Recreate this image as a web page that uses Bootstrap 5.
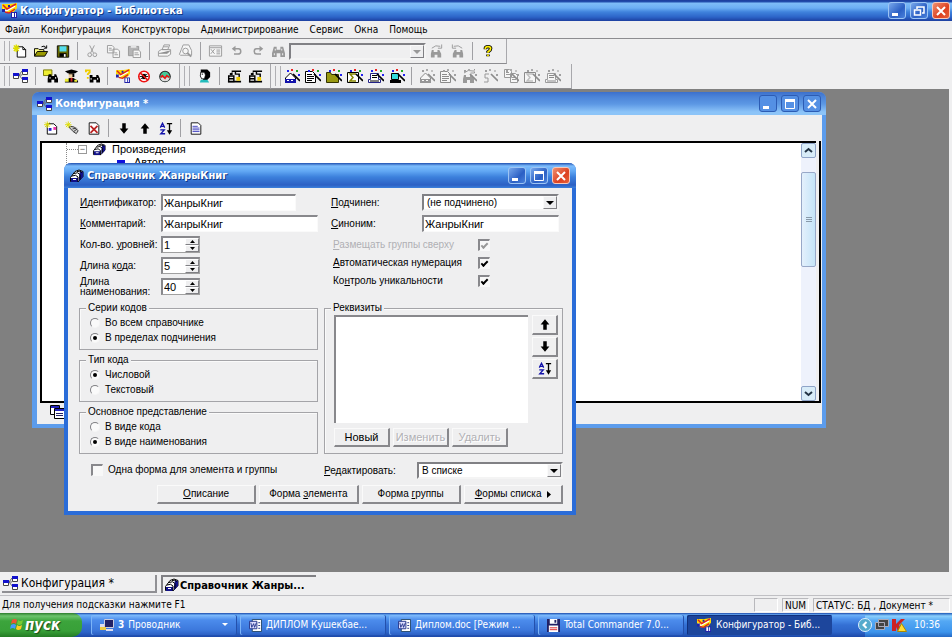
<!DOCTYPE html>
<html lang="ru">
<head>
<meta charset="utf-8">
<meta name="viewport" content="width=device-width, initial-scale=1">
<title>Конфигуратор - Библиотека</title>
<link href="https://cdn.jsdelivr.net/npm/bootstrap@5.3.0/dist/css/bootstrap.min.css" rel="stylesheet">
<style>
:root{--face:#efeff0;--shade:#9a9a9e;--ui:"DejaVu Sans Condensed","DejaVu Sans",sans-serif;--form:"Liberation Sans",Arial,sans-serif}
body{font:10px/14px var(--ui);color:#000;background:var(--face)}
button,input,select,textarea{font:inherit;color:inherit;border-radius:0;margin:0}
svg{display:block;flex:none}
u{text-underline-offset:1px}
.capbar{height:21px;padding:0 2px 0 1px;gap:2px;color:#fff;font-weight:700;font-size:11px;text-shadow:1px 1px 0 #123a86;background:linear-gradient(#1c3c9c 0,#2350b0 2px,#7fbdf8 3px,#6caef4 8px,#3f82dc 12px,#2c64c8 17px,#1c3fa0 21px)}
.cap-btns{gap:4px}
.cap-btn{width:18px;height:17px;padding:0;border:1px solid #9cc4f4;border-radius:3px;background:linear-gradient(135deg,#78a8ec,#2b5fc4 60%,#4a82dc)}
.cap-btn.shut{background:linear-gradient(135deg,#f09070,#dc4020 60%,#e86038);border-color:#f8c8b8}
.cap-btn svg{margin:auto}
.menubar{height:18px;padding-left:5px;gap:11px;border-bottom:1px solid #8c8c90}
.menubar a{color:#000;text-decoration:none}
.tools{height:25px}
.band{height:25px;border-right:1px solid #a8a8ac;border-bottom:1px solid #8c8c90}
.grip{width:6px;height:20px;margin:0 0 0 4px;border:solid #b0b0b4;border-width:0 1px}
.tb{width:21px;height:21px;padding:0;border:0;background:none;flex:none}
.tb svg{margin:auto}
.tb:disabled svg{filter:grayscale(1) opacity(.42)}
.rule{width:1px;height:18px;margin:0 4px;background:#a0a0a4;flex:none}
.sel{position:relative;display:flex}
.sel select{appearance:none;width:100%;height:17px;padding:0 18px 0 3px;border:2px solid;border-color:#808084 #f4f4f4 #f4f4f4 #808084;background:#fff;line-height:12px;opacity:1}
.sel i{position:absolute;right:2px;top:2px;width:14px;bottom:2px;background:var(--face);border:1px solid;border-color:#fafafa #808084 #808084 #fafafa;pointer-events:none}
.sel i::after{content:"";position:absolute;left:2px;top:4px;border:4px solid transparent;border-top-color:#000;border-bottom:0}
.sel.off i::after{border-top-color:#999}
.sel.off select{background:var(--face)}
.find-box{width:137px}
.desk{background:#808080;margin-right:3px;min-height:0;overflow:hidden}
.win{position:absolute;background:var(--face)}
.w-conf{left:32px;top:3px;width:794px;height:336px;border:solid #5c9cec;border-width:0 4px 4px 5px;border-radius:7px 7px 0 0}
.w-conf .capbar{height:23px;margin:0 -4px 0 -5px;padding:0 5px;border-radius:7px 7px 0 0;text-shadow:none;background:linear-gradient(#3c70cc,#4c84d8 5px,#5c98e4 12px,#8cc4f8 20px,#8cc4f8)}
.w-conf .cap-btn{background:#5490e4;border-color:#2c5cb4}
.w-dlg{left:64px;top:74px;width:512px;border:solid #2a6cd8;border-width:0 4px 4px;border-radius:7px 7px 0 0}
.w-dlg .capbar{height:25px;margin:0 -4px;padding:0 6px 0 5px;border-radius:7px 7px 0 0;background:linear-gradient(#2050b0 0,#7cbcfc 3px,#62a8f4 8px,#3c80dc 14px,#2c60c4 22px,#3c80dc)}
.w-tools{height:26px;flex:none}
.tree{margin:0 1px 0 3px;border-right:2px solid #000;border-bottom:2px solid #000;font:11px/13px var(--form)}
.tree-pane{border:solid #000;border-width:2px 0 0 2px;background:#fff;margin-right:3px;overflow:hidden}
.tree-list{margin-left:24px;border-left:1px dotted #888}
.twig{width:11px;border-top:1px dotted #888}
.pm{width:9px;height:9px;border:1px solid #999;color:#555;display:grid;place-items:center;font:9px/7px var(--form)}
.sb{width:15px;background:#eef2fc}
.sb button{height:15px;padding:0;border:1px solid #8fa4c8;border-radius:2px;background:#d8ecf8}
.sb button svg{margin:auto}
.sb-thumb{height:95px;border:1px solid #98a8c8;border-radius:2px;background:linear-gradient(90deg,#e4f0fc,#c4e4f8);margin-top:14px}
.low{height:21px;padding:0 0 3px 13px;flex:none}
.form{font:10px/14px var(--form);padding:4px 9px 7px 11px}
.two{display:grid;grid-template-columns:1fr 1fr;column-gap:6px}
.frow{height:21px;display:flex;align-items:center}
.frow>label{width:82px;padding-left:1px;line-height:10px;white-space:nowrap}
.rt .frow>label{width:98px;padding-left:7px}
.frow+.crow{margin-top:2px}
.inp{height:17px;padding:0 1px;font-size:11px;line-height:13px;border:solid;border-width:2px 1px 1px 2px;border-color:#88888c #fafafa #fafafa #88888c;background:#fff}
.short{width:135px}
.spin{width:39px;height:17px;border:solid;border-width:2px 1px 1px 2px;border-color:#88888c #a0a0a0 #a0a0a0 #88888c;background:#fff}
.spin input{width:22px;border:0;padding:0 0 0 1px;font-size:11px;line-height:13px;appearance:textfield;-moz-appearance:textfield;background:#fff}
.spin input::-webkit-inner-spin-button{appearance:none}
.spin button{width:14px;height:7px;padding:0;border:1px solid;border-color:#fff #808084 #808084 #fff;background:var(--face)}
.spin button svg{margin:auto}
.crow{height:18px;padding-left:9px;display:flex;align-items:center}
.crow label{width:145px}
.chk{appearance:none;width:12px;height:12px;border:solid;border-width:2px 1px 1px 2px;border-color:#88888c #f8f8f8 #f8f8f8 #88888c;background:#f8f8f8;display:grid;place-items:center}
.chk:checked::after{content:"";width:7px;height:4px;border:solid #000;border-width:0 0 2px 2px;transform:translateY(-1px) rotate(-45deg)}
.chk:disabled:checked::after{border-color:#999}
.dim{color:#b0b0b4}
.grp{border:1px solid #a4a4a8;box-shadow:inset 1px 1px 0 #fafafa;padding:0 8px 4px 10px;height:48px}
.grp legend{float:none;width:auto;font-size:10px;line-height:12px;margin:0 0 1px -4px;padding:0 2px;background:var(--face)}
.opt{height:15px;display:flex;align-items:center;gap:5px}
.opt input[type=radio]{appearance:none;width:10px;height:10px;border:1px solid;border-color:#808084 #f6f6f6 #f6f6f6 #808084;border-radius:50%;background:#fafafa;display:grid;place-items:center}
.opt input[type=radio]:checked::after{content:"";width:4px;height:4px;border-radius:50%;background:#000}
.stack{display:grid;gap:4px;margin-top:5px}
.pb{height:19px;padding:0;line-height:14px;border:solid;border-width:1px 2px 2px 1px;border-color:#fafafa #88888c #88888c #fafafa;background:var(--face);text-align:center}
.pb:disabled{color:#b0b0b4;text-shadow:1px 1px 0 #fff}
.pb svg{margin:auto}
.rq{height:152px;padding:0 4px 0 9px}
.rq legend{margin-left:-3px}
.rq textarea{display:block;width:100%;height:108px;resize:none;border:solid;border-width:2px 0 0 2px;border-color:#88888c;background:#fff}
.side{width:26px;gap:2px}
.side .pb{height:20px}
.three{gap:3px;margin-top:5px}
.three .pb{width:56px;font-size:11px}
.last{margin:8px 0 6px}
.edl{width:93px}
.act{gap:3px;padding-left:78px}
.act .pb{flex:1}
.tabs{height:23px;padding:3px 0 0 2px;gap:4px}
.tabs button{width:155px;height:18px;padding:0 1px;font-size:12px;line-height:15px;border:solid;background:none;white-space:nowrap}
.tabs .t1{border-width:0 2px 2px 0;border-color:#909094;gap:2px}
.tabs .t2{border-width:2px 0 0 2px;border-color:#808084;font-weight:700;font-size:11px}
.stat{height:18px;padding:0 2px;border-top:1px solid #c0c0c4}
.stat .cell{height:14px;border:1px solid;border-color:#b8b8bc #fff #fff #b8b8bc;padding:0 2px;line-height:13px}
.blank{width:24px}
.task{height:24px;color:#fff;background:linear-gradient(#1c48a8 0,#6cb0f8 2px,#4c90ec 6px,#3470d4 12px,#2c64c8 19px,#1c48a8)}
.go{width:82px;padding:0 0 0 10px;border:0;border-radius:0 9px 10px 0;color:#fff;font:italic 700 15px/20px var(--ui);text-shadow:1px 1px 1px #1c4c1c;background:linear-gradient(#2c7c2c,#6cc46c 3px,#3ca43c 8px,#38a038 18px,#247c24);gap:1px}
.jobs{padding:2px 0 2px 9px;gap:4px;min-width:0}
.jobs button{flex:1;min-width:0;border:0;border-radius:2px;padding:0 8px 0 9px;gap:4px;color:#fff;white-space:nowrap;background:linear-gradient(#80bcfc,#4c8cec 5px,#3c78dc 15px,#2c60c4);box-shadow:inset 1px 0 #7cb4f8,1px 0 #2450ac}
.jobs .on{background:#1d469c;box-shadow:inset 1px 1px #10307c}
.tray{width:87px;margin-left:33px;gap:2px;color:#fff;background:linear-gradient(#1c58b8 0,#8cd0fc 3px,#54a8f4 8px,#3c94ec 19px,#2468c4)}
.expand{margin-left:-7px}
</style>
</head>
<body class="d-flex flex-column vh-100 overflow-hidden">

<svg width="0" height="0" class="position-absolute" aria-hidden="true">
<defs>
<symbol id="logo" viewBox="0 0 17 15"><path fill="#fd0" d="M1 1h8l7-1v5l-4 5H5L1 7z"/><path fill="none" stroke="#fff" stroke-width="1.500" d="M2 6l3 2 9-5"/><path fill="none" stroke="#d22" stroke-width="1.500" d="M2 2l4 4 9-5M4 9l4 1 6-4"/><path fill="#22a" d="M1 6h3v3H1zM7 2h2v2H7zM10 9h6v6h-6z"/><path fill="#fff" d="M11 10h2v4h-2zM14 10h1v4h-1z"/></symbol>
<symbol id="nodes" viewBox="0 0 16 14"><path stroke="#666" fill="none" d="M5 6h4M6 6l3-4M6 6l4 5"/><path fill="#fff" stroke="#444" d="M.5 4.500h5v5h-5zM9.500.5h5v5h-5zM9.500 8.500h5v5h-5z"/><path fill="#11c" d="M0 4h6v3H0zM9 0h6v3H9zM9 8h6v3H9z"/></symbol>
<symbol id="drum" viewBox="0 0 16 14"><path fill="#fff" stroke="#000" d="M1.500 8.500L6 2.500q4-3 8 0v5L9.500 12.500h-8z"/><path fill="#118" d="M2 9h7v4H2zM11 2l3 1v5l-4 4V8z"/><path stroke="#000" fill="none" d="M3 7q4-2 6 1v5M5 4.500q4-2 6 1v5M8 2.500q3-1 5 1"/><path fill="#fff" d="M4 10h3v1H4z"/></symbol>
<symbol id="new" viewBox="0 0 16 14"><path fill="#fff" stroke="#000" d="M4.500 2.500h6l3 3v8h-9z"/><path fill="none" stroke="#000" d="M10.500 2.500v3h3"/><path stroke="#dd0" stroke-width="1.500" d="M0 4h7M3.500 0v8M1 1l5 6M6 1L1 7"/></symbol>
<symbol id="open" viewBox="0 0 16 14"><path fill="#ff8" stroke="#000" d="M.5 12.500v-8h4l1 1h5v2"/><path fill="#990" stroke="#000" d="M.5 12.500l3-5h11l-3 5z"/><path fill="none" stroke="#000" d="M8 2.500q3-2 5 1M13.500 1v3h-3"/></symbol>
<symbol id="save" viewBox="0 0 16 14"><path fill="#660" stroke="#000" d="M1.500.5h13v13h-13z"/><path fill="#5de" d="M4 1h8v6H4z"/><path fill="#000" d="M4 9h8v4H4z"/><path fill="#fff" d="M9 10h2v3H9z"/></symbol>
<symbol id="cut" viewBox="0 0 16 14"><path stroke="#222" fill="none" d="M5 1l4 8M10 1L6 9"/><circle cx="5" cy="11" r="2" fill="none" stroke="#222"/><circle cx="10.500" cy="11" r="2" fill="none" stroke="#222"/></symbol>
<symbol id="copy" viewBox="0 0 16 14"><path fill="#fff" stroke="#222" d="M1.500.5h5l2 2v6h-7zM7.500 4.500h5l2 2v7h-7z"/><path stroke="#222" d="M3 3.500h3M3 5.500h4M9 8.500h3M9 10.500h4"/></symbol>
<symbol id="paste" viewBox="0 0 16 14"><path fill="#666" stroke="#222" d="M1.500 1.500h11v10h-11z"/><path fill="#ddd" d="M4 1h6v2H4z"/><path fill="#fff" stroke="#222" d="M6.500 5.500h6l2 2v6h-8z"/><path stroke="#222" d="M8 8.500h4M8 10.500h5"/></symbol>
<symbol id="print" viewBox="0 0 16 14"><path fill="#fff" stroke="#222" d="M5.500 5.500l2-5h6l-2 5zM1.500 7.500l3-2h10v5l-3 2h-10z"/><path stroke="#222" d="M2 9.500h9l3-3M7 2.500h5"/></symbol>
<symbol id="preview" viewBox="0 0 16 14"><path fill="#fff" stroke="#222" d="M1.500 10.500l2-5 2-5h6l3 6v5h-12z"/><circle cx="8" cy="7" r="3" fill="none" stroke="#222"/><path stroke="#222" stroke-width="2" d="M10 9l4 4"/></symbol>
<symbol id="props" viewBox="0 0 16 14"><path fill="#fff" stroke="#222" d="M1.500 1.500h13v11h-13z"/><path fill="none" stroke="#222" d="M2 3.500h12M3 5l4 5M7 5l-4 5M9 6h4M9 8h4M9 10h4"/></symbol>
<symbol id="undo" viewBox="0 0 16 14"><path fill="none" stroke="#222" stroke-width="2" d="M4 4h6q3 0 3 3.500T9 11H4"/><path fill="#222" d="M6 0v8L1 4z"/></symbol>
<symbol id="find" viewBox="0 0 16 14"><path fill="#222" d="M3 2h3v3h4V2h3l2 7v4h-5V9H6v4H1V9z"/><path fill="#fff" d="M4 4h1v2H4zM11 4h1v2h-1zM3 9h1v2H3zM12 9h1v2h-1z"/></symbol>
<symbol id="findn" viewBox="0 0 16 14"><path fill="#222" d="M3 6h2v2h4V6h2l2 4v4H9v-3H6v3H2v-4z"/><path fill="none" stroke="#222" d="M3 4q4-4 9-2M13.500 0v4h-4"/></symbol>
<symbol id="help" viewBox="0 0 16 14"><path fill="none" stroke="#000" stroke-width="4" d="M5 5V4q0-2 3-2t3 2-3 4v1M8 11v2"/><path fill="none" stroke="#fe0" stroke-width="2" d="M5 5V4q0-2 3-2t3 2-3 4v1M8 11v2"/></symbol>
<symbol id="folderfind" viewBox="0 0 16 14"><path fill="#ee3" stroke="#770" d="M.5.5h9v6h-9z"/><path d="M6 5h3v2h3V5h2l2 5v4h-4v-3H9v3H5v-4z"/><path fill="#fff" d="M7 8h1v2H7zM13 8h1v2h-1z"/></symbol>
<symbol id="user" viewBox="0 0 16 14"><path d="M1 2l7-2 7 2-3 2H4z"/><path d="M6 9h4l5 3v2H1v-2z"/><path fill="#ec9" d="M5 4h5v5H5z"/><path d="M5 4h5v1H5zM9 4h2v4H9z"/><path fill="#ee3" d="M1 10h4v3H1zM11 11h3v2h-3z"/><path fill="#c22" d="M7 9h2v4H7z"/></symbol>
<symbol id="qfind" viewBox="0 0 16 14"><path d="M5 6h3v2h4V6h2l2 4v4h-4v-3H9v3H5v-4z"/><path fill="#fff" d="M6 9h1v2H6zM13 9h1v2h-1z"/><path fill="none" stroke="#ec0" stroke-width="2" d="M1 3V1h4v2L3 5v1M3 8v2"/></symbol>
<symbol id="bug" viewBox="0 0 16 14"><circle cx="8" cy="7" r="6" fill="#fff"/><path d="M6 4h4v6H6z"/><path stroke="#000" d="M4 4l8 6M12 4l-8 6M3 7h10"/><circle cx="8" cy="7" r="6" fill="none" stroke="#e11" stroke-width="1.800"/><path stroke="#e11" stroke-width="1.800" d="M4 3l8 8"/></symbol>
<symbol id="wave" viewBox="0 0 16 14"><circle cx="8" cy="7" r="6" fill="#4c9" stroke="#222" stroke-width="1.300"/><path fill="#ddd" d="M2.500 8h11q-1 4.500-5.500 4.500T2.500 8z"/><path fill="none" stroke="#e11" stroke-width="1.800" d="M3 8l2-2 3 3 2-3 3 2"/></symbol>
<symbol id="face" viewBox="0 0 16 14"><path d="M4 0h7l3 3v5l-4 4H6l1-3-3-1z"/><path fill="#fff" stroke="#000" stroke-width=".8" d="M4 3h4l1 3-1 4H5L3.500 7z"/><path fill="#2bb" d="M4 11h7l2 3H3z"/><path d="M5 4.500h1.500v1H5z"/></symbol>
<symbol id="tap" viewBox="0 0 16 14"><path fill="none" stroke="#000" stroke-width="1.500" d="M5 2h10M9 2v3h4v3M1.800 13V7h5.500v6zM2 10h5"/><path d="M1 12h14v2H1zM3 4l3-1v3H3z"/><path fill="#ec0" d="M10 8h4v4h-4z"/></symbol>
<symbol id="wand" viewBox="0 0 16 14"><path stroke="#000" stroke-width="1.700" d="M9 5l7 7"/><path fill="#e22" d="M7 0h2v2H7z"/><path fill="#2a2" d="M12 1h2v2h-2z"/><path fill="#22e" d="M14 5h2v2h-2zM3 1h2v2H3z"/></symbol>
<symbol id="b1" viewBox="0 0 16 14"><path fill="#fff" stroke="#000" d="M1.500 9l5-5 5 5v4h-10z"/><path fill="#11a" d="M1 10h11v4H1z"/><path fill="#fff" d="M3 11h2v1H3zM7 11h2v1H7z"/></symbol>
<symbol id="b2" viewBox="0 0 16 14"><path fill="#fff" stroke="#000" d="M.5 2.500h7l3 3v8H.5z"/><path stroke="#000" d="M2 5.500h5M2 7.500h7M2 9.500h7M2 11.500h5"/></symbol>
<symbol id="b3" viewBox="0 0 16 14"><path fill="#991" stroke="#330" d="M.5 3.500h4l1 2h7v8H.5z"/></symbol>
<symbol id="b4" viewBox="0 0 16 14"><path fill="#fff" stroke="#000" d="M.5 3.500h11v10H.5z"/><path fill="none" stroke="#880" stroke-width="1.500" d="M9 5H3l3 3.500L3 12h6"/></symbol>
<symbol id="b5" viewBox="0 0 16 14"><path fill="#fff" stroke="#228" d="M2.500 4.500h8v6h2v3H.5v-3h2z"/><path stroke="#000" d="M4 6.500h5M4 8.500h5M2 12h9"/></symbol>
<symbol id="b6" viewBox="0 0 16 14"><path fill="#3dd" stroke="#000" d="M2.500 4.500h7v6h-7z"/><path fill="#000" d="M1 11h11v3H1z"/></symbol>
<symbol id="down" viewBox="0 0 16 14"><path d="M6 1h4v6h3l-5 6-5-6h3z"/></symbol>
<symbol id="up" viewBox="0 0 16 14"><path d="M6 13h4V7h3L8 1 3 7h3z"/></symbol>
<symbol id="sort" viewBox="0 0 16 14"><path fill="none" stroke="#11a" stroke-width="1.500" d="M1.500 6L4 1l2.500 5M2 4.500h4M1.500 8.500H6L2 13h5"/><path stroke="#000" stroke-width="1.500" d="M9 1.500h6M12 1v10"/><path d="M9 9h6l-3 5z"/></symbol>
<symbol id="page" viewBox="0 0 16 14"><path fill="#fff" stroke="#000" d="M2.500.5h8l3 3v10h-11z"/><path stroke="#33b" d="M4 4.500h6M4 6.500h8M4 8.500h8M4 10.500h8"/></symbol>
<symbol id="pages" viewBox="0 0 16 14"><path fill="#fff" stroke="#000" d="M.5.5h9v9h-9z"/><path fill="#fff" stroke="#000" d="M4.500 3.500h10v10h-10z"/><path fill="#22b" d="M1 1h8v2H1zM5 4h9v2H5z"/><path stroke="#226" d="M6 8.500h7M6 10.500h7"/></symbol>
<symbol id="newobj" viewBox="0 0 16 14"><path fill="#fff" stroke="#000" d="M3.500 2.500h7l3 3v8h-10z"/><path fill="#22c" d="M5 7h3v3H5z"/><path fill="#e3a" d="M10 6h3v3h-3z"/><path stroke="#dd0" d="M0 3.500h7M3.500 0v7M1 1l5 5M6 1L1 6"/></symbol>
<symbol id="key" viewBox="0 0 16 14"><path fill="#ccc" stroke="#333" d="M5 5l5 1 4 4-2 3-3-2-4-4z"/><path stroke="#333" d="M8 8l4-1M9 11l4-3"/><path stroke="#dd0" d="M0 3.500h7M3.500 0v7M1 1l5 5M6 1L1 6"/></symbol>
<symbol id="del" viewBox="0 0 16 14"><path fill="#fff" stroke="#000" d="M2.500.5h8l3 3v10h-11z"/><path stroke="#b22" stroke-width="2" d="M4 4l8 8M12 4l-8 8"/></symbol>
<symbol id="min" viewBox="0 0 12 12"><path fill="#fff" d="M1 8h6v3H1z"/></symbol>
<symbol id="max" viewBox="0 0 12 12"><path fill="none" stroke="#fff" d="M1.500 2v8.500h9V2"/><path fill="#fff" d="M1 1h10v3H1z"/></symbol>
<symbol id="res" viewBox="0 0 12 12"><path fill="none" stroke="#fff" stroke-width="1.500" d="M4 4V2h7v6H9M1.500 5h6v5h-6z"/></symbol>
<symbol id="x" viewBox="0 0 12 12"><path stroke="#fff" stroke-width="2" d="M2 2l8 8M10 2l-8 8"/></symbol>
<symbol id="word" viewBox="0 0 14 14"><path fill="#fff" stroke="#246" d="M3.500.5h10v13h-10z"/><path fill="#ddf" stroke="#238" d="M.5 2.500h8v8h-8z"/><path fill="none" stroke="#238" d="M2 4l1 5 2-4 1 4 2-5M10 4h2M10 7h2M10 10h2"/></symbol>
<symbol id="pc" viewBox="0 0 14 14"><path fill="#226" stroke="#ccd" d="M4.500 1.500h9v8h-9z"/><path fill="#dde" d="M6 11h7v2H6zM0 6h4v3H0z"/><path fill="#ec4" d="M0 9h6v3H0z"/></symbol>
<symbol id="disk" viewBox="0 0 14 14"><path fill="#226" d="M0 0h14v14H0z"/><path fill="#fff" d="M3 0h8v5H3zM2 7h10v7H2z"/><path fill="#226" d="M8 1h2v3H8z"/><path stroke="#d22" d="M3 9.500h8M3 11.500h8"/></symbol>
<symbol id="flag" viewBox="0 0 14 14"><path fill="#e53" d="M2 2q3-2 5 0L6 6Q4 4 1 6z"/><path fill="#7c3" d="M8 2q2 2 5 0l-1 4q-3 2-5 0z"/><path fill="#49f" d="M1 7q3-2 5 0l-1 4q-2-2-5 0z"/><path fill="#fc2" d="M7 7q2 2 5 0l-1 4q-3 2-5 0z"/></symbol>
</defs>
</svg>

<header class="capbar d-flex align-items-center">
  <svg width="17" height="15"><use href="#logo"/></svg>
  <span class="flex-grow-1">Конфигуратор - Библиотека</span>
  <div class="cap-btns d-flex">
    <button class="cap-btn" aria-label="Свернуть"><svg width="12" height="12"><use href="#min"/></svg></button>
    <button class="cap-btn" aria-label="Восстановить"><svg width="12" height="12"><use href="#res"/></svg></button>
    <button class="cap-btn shut" aria-label="Закрыть"><svg width="12" height="12"><use href="#x"/></svg></button>
  </div>
</header>

<nav class="menubar d-flex align-items-center">
  <a href="#">Файл</a><a href="#">Конфигурация</a><a href="#">Конструкторы</a><a href="#">Администрирование</a><a href="#">Сервис</a><a href="#">Окна</a><a href="#">Помощь</a>
</nav>

<div class="tools d-flex">
  <div class="band d-flex align-items-center pe-2">
    <span class="grip"></span>
    <button class="tb" aria-label="Новый"><svg width="15" height="14"><use href="#new"/></svg></button>
    <button class="tb" aria-label="Открыть"><svg width="15" height="14"><use href="#open"/></svg></button>
    <button class="tb" aria-label="Сохранить"><svg width="14" height="13"><use href="#save"/></svg></button>
    <span class="rule"></span>
    <button class="tb" disabled aria-label="Вырезать"><svg width="15" height="14"><use href="#cut"/></svg></button>
    <button class="tb" disabled aria-label="Копировать"><svg width="15" height="13"><use href="#copy"/></svg></button>
    <button class="tb" disabled aria-label="Вставить"><svg width="15" height="13"><use href="#paste"/></svg></button>
    <span class="rule"></span>
    <button class="tb" disabled aria-label="Печать"><svg width="15" height="14"><use href="#print"/></svg></button>
    <button class="tb" disabled aria-label="Просмотр"><svg width="15" height="14"><use href="#preview"/></svg></button>
    <span class="rule"></span>
    <button class="tb" disabled aria-label="Свойства"><svg width="15" height="14"><use href="#props"/></svg></button>
    <button class="tb" disabled aria-label="Отменить"><svg width="12" height="12"><use href="#undo"/></svg></button>
    <button class="tb" disabled aria-label="Повторить"><svg width="12" height="12"><use href="#undo" transform="matrix(-1 0 0 1 12 0)"/></svg></button>
    <button class="tb" disabled aria-label="Найти"><svg width="15" height="13"><use href="#find"/></svg></button>
    <span class="sel off find-box"><select aria-label="Строка поиска" disabled><option></option></select><i></i></span>
    <button class="tb" disabled aria-label="Найти далее"><svg width="15" height="14"><use href="#findn"/></svg></button>
    <button class="tb" disabled aria-label="Найти ранее"><svg width="15" height="14"><use href="#findn" transform="matrix(-1 0 0 1 15 0)"/></svg></button>
    <span class="rule"></span>
    <button class="tb" aria-label="Помощь"><svg width="14" height="14"><use href="#help"/></svg></button>
  </div>
</div>

<div class="tools d-flex">
  <div class="band d-flex align-items-center pe-1">
    <span class="grip"></span>
    <button class="tb" aria-label="Конфигурация"><svg width="16" height="14"><use href="#nodes"/></svg></button>
    <span class="rule"></span>
    <button class="tb" aria-label="Поиск в объектах"><svg width="15" height="14"><use href="#folderfind"/></svg></button>
    <button class="tb" aria-label="Пользователи"><svg width="15" height="14"><use href="#user"/></svg></button>
    <button class="tb" aria-label="Поиск по справке"><svg width="15" height="14"><use href="#qfind"/></svg></button>
    <span class="rule"></span>
    <button class="tb" aria-label="Предприятие"><svg width="16" height="14"><use href="#logo"/></svg></button>
    <button class="tb" aria-label="Отладчик"><svg width="14" height="13"><use href="#bug"/></svg></button>
    <button class="tb" aria-label="Монитор"><svg width="14" height="13"><use href="#wave"/></svg></button>
  </div>
  <div class="band d-flex align-items-center pe-1">
    <span class="grip"></span>
    <button class="tb ms-1" aria-label="Пользователь"><svg width="15" height="14"><use href="#face"/></svg></button>
    <span class="rule"></span>
    <button class="tb" aria-label="Загрузить"><svg width="15" height="14"><use href="#tap"/></svg></button>
    <button class="tb" aria-label="Выгрузить"><svg width="15" height="14"><use href="#tap"/></svg></button>
  </div>
  <div class="band d-flex align-items-center pe-2">
    <span class="grip"></span>
    <button class="tb" aria-label="Справочник"><svg width="16" height="14"><use href="#b1"/><use href="#wand"/></svg></button>
    <button class="tb" aria-label="Документ"><svg width="16" height="14"><use href="#b2"/><use href="#wand"/></svg></button>
    <button class="tb" aria-label="Журнал"><svg width="16" height="14"><use href="#b3"/><use href="#wand"/></svg></button>
    <button class="tb" aria-label="Отчет"><svg width="16" height="14"><use href="#b4"/><use href="#wand"/></svg></button>
    <button class="tb" aria-label="Форма"><svg width="16" height="14"><use href="#b5"/><use href="#wand"/></svg></button>
    <button class="tb" aria-label="Обработка"><svg width="16" height="14"><use href="#b6"/><use href="#wand"/></svg></button>
    <span class="rule"></span>
    <button class="tb" disabled aria-label="Мастер 1"><svg width="16" height="14"><use href="#b1"/><use href="#wand"/></svg></button>
    <button class="tb" disabled aria-label="Мастер 2"><svg width="16" height="14"><use href="#b2"/><use href="#wand"/></svg></button>
    <button class="tb" disabled aria-label="Мастер 3"><svg width="16" height="14"><use href="#findn"/><use href="#wand"/></svg></button>
    <button class="tb" disabled aria-label="Мастер 4"><svg width="16" height="14"><path fill="none" stroke="#222" d="M7 5H3v4h3v4H2"/><use href="#wand"/></svg></button>
    <button class="tb" disabled aria-label="Мастер 5"><svg width="16" height="14"><use href="#copy"/><use href="#wand"/></svg></button>
    <button class="tb" disabled aria-label="Мастер 6"><svg width="16" height="14"><use href="#b4"/><use href="#wand"/></svg></button>
    <button class="tb" disabled aria-label="Мастер 7"><svg width="16" height="14"><use href="#b5"/><use href="#wand"/></svg></button>
  </div>
</div>

<main class="desk position-relative flex-grow-1">
  <section class="win w-conf d-flex flex-column">
    <div class="capbar d-flex align-items-center">
      <svg width="16" height="14"><use href="#nodes"/></svg>
      <span class="flex-grow-1">Конфигурация *</span>
      <div class="cap-btns d-flex">
        <button class="cap-btn" aria-label="Свернуть"><svg width="12" height="12"><use href="#min"/></svg></button>
        <button class="cap-btn" aria-label="Развернуть"><svg width="12" height="12"><use href="#max"/></svg></button>
        <button class="cap-btn" aria-label="Закрыть"><svg width="12" height="12"><use href="#x"/></svg></button>
      </div>
    </div>
    <div class="w-tools d-flex align-items-center ps-1">
      <button class="tb" aria-label="Новый объект"><svg width="15" height="14"><use href="#newobj"/></svg></button>
      <button class="tb" aria-label="Свойства"><svg width="15" height="14"><use href="#key"/></svg></button>
      <button class="tb" aria-label="Удалить"><svg width="14" height="13"><use href="#del"/></svg></button>
      <span class="rule"></span>
      <button class="tb" aria-label="Вниз"><svg width="14" height="13"><use href="#down"/></svg></button>
      <button class="tb" aria-label="Вверх"><svg width="14" height="13"><use href="#up"/></svg></button>
      <button class="tb" aria-label="Сортировать"><svg width="14" height="13"><use href="#sort"/></svg></button>
      <span class="rule"></span>
      <button class="tb" aria-label="Описание"><svg width="14" height="13"><use href="#page"/></svg></button>
    </div>
    <div class="tree flex-grow-1 d-flex">
      <div class="tree-pane flex-grow-1 d-flex">
        <div class="tree-list flex-grow-1">
          <div class="d-flex align-items-center"><span class="twig"></span><span class="pm me-1">−</span><svg width="17" height="13"><use href="#drum"/></svg><span class="ps-1">Произведения</span></div>
          <div class="d-flex align-items-center gap-2 ps-5"><svg width="11" height="8"><path fill="#11d" d="M2 1h8v5H2z"/></svg><span>Автор</span></div>
        </div>
        <div class="sb d-flex flex-column">
          <button aria-label="Прокрутить вверх"><svg width="9" height="7"><path fill="none" stroke="#234" stroke-width="2" d="M1 5l3.500-3L8 5"/></svg></button>
          <div class="sb-thumb d-flex align-items-center justify-content-center"><svg width="6" height="7"><path stroke="#89a" d="M0 1.500h6M0 3.500h6M0 5.500h6"/></svg></div>
          <button class="mt-auto" aria-label="Прокрутить вниз"><svg width="9" height="7"><path fill="none" stroke="#234" stroke-width="2" d="M1 2l3.500 3L8 2"/></svg></button>
        </div>
      </div>
    </div>
    <div class="low d-flex align-items-center"><svg width="16" height="14"><use href="#pages"/></svg></div>
  </section>

  <section class="win w-dlg">
    <div class="capbar d-flex align-items-center">
      <svg width="16" height="14"><use href="#drum"/></svg>
      <span class="flex-grow-1">Справочник ЖанрыКниг</span>
      <div class="cap-btns d-flex">
        <button class="cap-btn" aria-label="Свернуть"><svg width="12" height="12"><use href="#min"/></svg></button>
        <button class="cap-btn" aria-label="Развернуть"><svg width="12" height="12"><use href="#max"/></svg></button>
        <button class="cap-btn shut" aria-label="Закрыть"><svg width="12" height="12"><use href="#x"/></svg></button>
      </div>
    </div>
    <form class="form">
      <div class="two">
        <div>
          <div class="frow"><label for="ident"><u>И</u>дентификатор:</label><input class="inp short" id="ident" type="text" value="ЖанрыКниг"></div>
          <div class="frow"><label for="comm"><u>К</u>омментарий:</label><input class="inp flex-grow-1" id="comm" type="text" value="ЖанрыКниг"></div>
          <div class="frow"><label for="lev">Кол-во. <u>у</u>ровней:</label><span class="spin d-flex"><input id="lev" type="number" value="1"><span class="d-flex flex-column"><button type="button" aria-label="Больше"><svg width="5" height="3"><path d="M0 3h5L2.500 0z"/></svg></button><button type="button" aria-label="Меньше"><svg width="5" height="3"><path d="M0 0h5L2.500 3z"/></svg></button></span></span></div>
          <div class="frow"><label for="len">Длина к<u>о</u>да:</label><span class="spin d-flex"><input id="len" type="number" value="5"><span class="d-flex flex-column"><button type="button" aria-label="Больше"><svg width="5" height="3"><path d="M0 3h5L2.500 0z"/></svg></button><button type="button" aria-label="Меньше"><svg width="5" height="3"><path d="M0 0h5L2.500 3z"/></svg></button></span></span></div>
          <div class="frow"><label for="nam"><u>Д</u>лина<br>наименования:</label><span class="spin d-flex"><input id="nam" type="number" value="40"><span class="d-flex flex-column"><button type="button" aria-label="Больше"><svg width="5" height="3"><path d="M0 3h5L2.500 0z"/></svg></button><button type="button" aria-label="Меньше"><svg width="5" height="3"><path d="M0 0h5L2.500 3z"/></svg></button></span></span></div>
          <div class="stack">
            <fieldset class="grp"><legend>Серии кодов</legend>
              <label class="opt"><input type="radio" name="ser">Во всем справочнике</label>
              <label class="opt"><input type="radio" name="ser" checked>В пределах подчинения</label></fieldset>
            <fieldset class="grp"><legend>Тип кода</legend>
              <label class="opt"><input type="radio" name="typ" checked>Числовой</label>
              <label class="opt"><input type="radio" name="typ">Текстовый</label></fieldset>
            <fieldset class="grp"><legend>Основное представление</legend>
              <label class="opt"><input type="radio" name="rep">В виде кода</label>
              <label class="opt"><input type="radio" name="rep" checked>В виде наименования</label></fieldset>
          </div>
        </div>
        <div class="rt d-flex flex-column">
          <div class="frow"><label for="own"><u>П</u>одчинен:</label><span class="sel flex-grow-1 me-1"><select id="own"><option>(не подчинено)</option></select><i></i></span></div>
          <div class="frow"><label for="syn"><u>С</u>иноним:</label><input class="inp flex-grow-1 me-1" id="syn" type="text" value="ЖанрыКниг" size="10"></div>
          <div class="crow"><label class="dim" for="c1"><u>Р</u>азмещать группы сверху</label><input class="chk" id="c1" type="checkbox" checked disabled></div>
          <div class="crow"><label for="c2"><u>А</u>втоматическая нумерация</label><input class="chk" id="c2" type="checkbox" checked></div>
          <div class="crow"><label for="c3">Ко<u>н</u>троль уникальности</label><input class="chk" id="c3" type="checkbox" checked></div>
          <fieldset class="grp rq mt-auto"><legend>Реквизиты</legend>
            <div class="d-flex gap-1">
              <div class="flex-grow-1"><textarea aria-label="Реквизиты"></textarea></div>
              <div class="side d-flex flex-column">
                <button type="button" class="pb" aria-label="Вверх"><svg width="14" height="13"><use href="#up"/></svg></button>
                <button type="button" class="pb" aria-label="Вниз"><svg width="14" height="13"><use href="#down"/></svg></button>
                <button type="button" class="pb" aria-label="Сортировать"><svg width="14" height="13"><use href="#sort"/></svg></button>
              </div>
            </div>
            <div class="three d-flex"><button type="button" class="pb">Новый</button><button type="button" class="pb" disabled>Изменить</button><button type="button" class="pb" disabled>Удалить</button></div>
          </fieldset>
        </div>
      </div>
      <div class="two last">
        <label class="opt ms-2 ps-1"><input class="chk" type="checkbox"><span>О<u>д</u>на форма для элемента и группы</span></label>
        <div class="d-flex align-items-center"><label for="ed" class="edl"><u>Р</u>едактировать:</label><span class="sel flex-grow-1"><select id="ed"><option>В списке</option></select><i></i></span></div>
      </div>
      <div class="act d-flex"><button type="button" class="pb"><u>О</u>писание</button><button type="button" class="pb">Форма <u>э</u>лемента</button><button type="button" class="pb">Форма <u>г</u>руппы</button><button type="button" class="pb"><u>Ф</u>ормы списка &nbsp;<svg width="4" height="7" class="d-inline"><path d="M0 0l4 3.500L0 7z"/></svg></button></div>
    </form>
  </section>
</main>

<div class="tabs d-flex">
  <button class="t1 d-flex align-items-center"><svg width="16" height="14"><use href="#nodes"/></svg>Конфигурация *</button>
  <button class="t2 d-flex align-items-center"><svg width="16" height="14"><use href="#drum"/></svg>Справочник Жанры...</button>
</div>

<footer class="stat d-flex align-items-center gap-1">
  <span class="flex-grow-1">Для получения подсказки нажмите F1</span>
  <span class="cell blank"></span><span class="cell">NUM</span><span class="cell pe-3">СТАТУС: БД , Документ *</span>
</footer>

<div class="task d-flex">
  <button class="go d-flex align-items-center"><svg width="14" height="14"><use href="#flag"/></svg>пуск</button>
  <div class="jobs d-flex flex-grow-1">
    <button class="d-flex align-items-center"><svg width="14" height="14"><use href="#pc"/></svg><b>3</b><span class="flex-grow-1 text-start">Проводник</span><svg width="6" height="4"><path fill="#fff" d="M0 0h6L3 3z"/></svg></button>
    <button class="d-flex align-items-center"><svg width="13" height="13"><use href="#word"/></svg>ДИПЛОМ Кушекбае...</button>
    <button class="d-flex align-items-center"><svg width="13" height="13"><use href="#word"/></svg>Диплом.doc [Режим ...</button>
    <button class="d-flex align-items-center"><svg width="13" height="13"><use href="#disk"/></svg>Total Commander 7.0...</button>
    <button class="on d-flex align-items-center"><svg width="16" height="14"><use href="#logo"/></svg>Конфигуратор - Биб...</button>
  </div>
  <div class="tray d-flex align-items-center">
    <svg class="expand" width="14" height="14"><circle cx="7" cy="7" r="6.500" fill="#5ac" stroke="#def"/><path fill="none" stroke="#fff" stroke-width="2" d="M8.500 4l-3 3 3 3"/></svg>
    <svg width="16" height="14"><path fill="#444" stroke="#aab" d="M4.500 1.500h10v7h-10zM1.500 4.500h9v7h-9z"/></svg>
    <svg width="15" height="14"><path fill="#c22" d="M0 1h4v5l5-5h4L7 7l3 6H6L4 9v4H0z"/><path fill="#fd3" stroke="#a80" d="M9.500 5.500l5 8h-9z"/></svg>
    <span class="ms-auto me-1 pe-2">10:36</span>
  </div>
</div>
<script src="https://cdn.jsdelivr.net/npm/bootstrap@5.3.0/dist/js/bootstrap.bundle.min.js"></script>
</body>
</html>
